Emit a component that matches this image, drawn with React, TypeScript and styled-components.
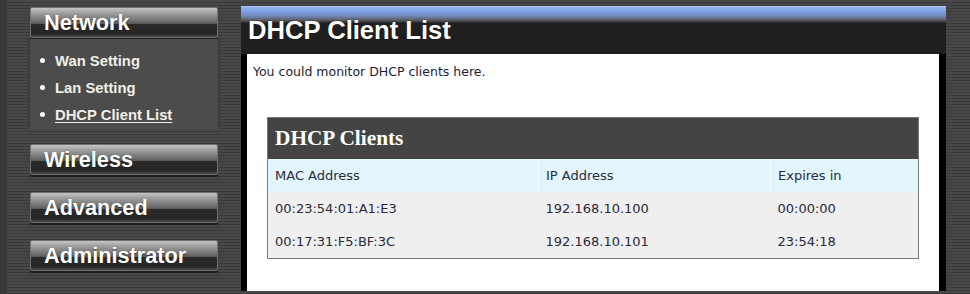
import React from "react";
import styled, { createGlobalStyle } from "styled-components";

const Global = createGlobalStyle`
  html, body { margin: 0; padding: 0; }
  body {
    background: repeating-linear-gradient(to bottom, #484848 0px, #484848 2px, #3a3a3a 2px, #3a3a3a 3px);
    font-family: "Liberation Sans", Arial, sans-serif;
    overflow: hidden;
  }
`;

const Page = styled.div`
  display: flex;
  align-items: flex-start;
  width: 970px;
  height: 294px;
  border-left: 7px solid #3a3a3a;
  box-sizing: border-box;
`;

const Sidebar = styled.nav`
  width: 188px;
  margin-left: 23px;
  padding-top: 7px;
  display: flex;
  flex-direction: column;
`;

const MenuButton = styled.div<{ $gap?: number }>`
  height: 29px;
  margin-top: ${(p) => p.$gap ?? 0}px;
  border: 1px solid #707070;
  border-radius: 2px;
  box-sizing: content-box;
  background: linear-gradient(
    to bottom,
    #c4c4c4 0%,
    #9a9a9a 20%,
    #707070 45%,
    #5a5a5a 54%,
    #2b2b2b 56%,
    #262626 88%,
    #4a4a4a 100%
  );
  box-shadow: 0 2px 0 #1f1f1f;
  color: #ffffff;
  font-weight: bold;
  font-size: 21.7px;
  line-height: 29px;
  padding-left: 13px;
  text-shadow: 0 1px 1px #222;
`;

const SubPanel = styled.ul`
  list-style: none;
  margin: 1px 0 0 0;
  padding: 8px 0 0 10px;
  height: 82px;
  background: #4c4c4c;
  border-left: 2px solid #3c3c3c;
  border-right: 2px solid #3c3c3c;
  margin-left: -2px;
  margin-right: -2px;
`;

const SubItem = styled.li<{ $active?: boolean }>`
  display: flex;
  align-items: center;
  height: 27px;
  gap: 10px;
  color: #f2efe6;
  font-weight: bold;
  font-size: 14.8px;
  text-decoration: ${(p) => (p.$active ? "underline" : "none")};
  text-underline-offset: 2px;
`;

const Bullet = styled.span`
  width: 5px;
  height: 5px;
  border-radius: 50%;
  background: #ffffff;
  flex: none;
`;

const Main = styled.main`
  margin-left: 23px;
  width: 705px;
  padding-top: 6px;
`;

const TitleBar = styled.h1`
  margin: 0;
  height: 48px;
  box-sizing: border-box;
  background: linear-gradient(
    to bottom,
    #cfe0ff 0px,
    #94b4f2 1px,
    #7b9de2 6px,
    #7088b8 10px,
    #5c5f68 14px,
    #3a3a3a 16px,
    #1f1f1f 17px,
    #1f1f1f 100%
  );
  color: #ffffff;
  font-size: 25.6px;
  font-weight: bold;
  line-height: 26px;
  padding: 11px 0 0 7px;
  text-shadow: 0 0 1px #000;
`;

const Content = styled.section`
  height: 237px;
  box-sizing: border-box;
  background: #ffffff;
  border-left: 6px solid #000;
  border-right: 7px solid #000;
  padding: 10px 20px 0 6px;
`;

const Intro = styled.p`
  margin: 0;
  font-family: "DejaVu Sans", Verdana, sans-serif;
  font-size: 12.5px;
  line-height: 16px;
  color: #1c1c30;
`;

const ClientTable = styled.table`
  margin: 37px 0 0 14px;
  width: 652px;
  border-collapse: collapse;
  border: 1px solid #7a7a7a;
  font-family: "DejaVu Sans", Verdana, sans-serif;
  font-size: 13px;
  color: #2a2a3a;
`;

const Caption = styled.th`
  background: #444444;
  height: 41px;
  padding: 0 0 0 7px;
  text-align: left;
  font-family: "Liberation Serif", "Times New Roman", serif;
  font-size: 21.3px;
  font-weight: bold;
  color: #ffffff;
`;

const HeadCell = styled.td<{ $w?: number }>`
  background: #e3f5fc;
  height: 33px;
  padding: 0 0 0 7px;
  width: ${(p) => (p.$w ? `${p.$w}px` : "auto")};
  border-left: 1px solid #f4fbff;
  &:first-child { border-left: none; }
`;

const Cell = styled.td`
  background: #efefef;
  height: 33px;
  padding: 0 0 0 7px;
`;

const clients = [
  { mac: "00:23:54:01:A1:E3", ip: "192.168.10.100", exp: "00:00:00" },
  { mac: "00:17:31:F5:BF:3C", ip: "192.168.10.101", exp: "23:54:18" },
];

export default function App() {
  return (
    <>
      <Global />
      <Page>
        <Sidebar>
          <MenuButton>Network</MenuButton>
          <SubPanel>
            <SubItem><Bullet />Wan Setting</SubItem>
            <SubItem><Bullet />Lan Setting</SubItem>
            <SubItem $active><Bullet />DHCP Client List</SubItem>
          </SubPanel>
          <MenuButton $gap={15}>Wireless</MenuButton>
          <MenuButton $gap={17}>Advanced</MenuButton>
          <MenuButton $gap={17}>Administrator</MenuButton>
        </Sidebar>
        <Main>
          <TitleBar>DHCP Client List</TitleBar>
          <Content>
            <Intro>You could monitor DHCP clients here.</Intro>
            <ClientTable>
              <thead>
                <tr>
                  <Caption colSpan={3}>DHCP Clients</Caption>
                </tr>
              </thead>
              <tbody>
                <tr>
                  <HeadCell $w={263}>MAC Address</HeadCell>
                  <HeadCell $w={224}>IP Address</HeadCell>
                  <HeadCell>Expires in</HeadCell>
                </tr>
                {clients.map((c) => (
                  <tr key={c.mac}>
                    <Cell>{c.mac}</Cell>
                    <Cell>{c.ip}</Cell>
                    <Cell>{c.exp}</Cell>
                  </tr>
                ))}
              </tbody>
            </ClientTable>
          </Content>
        </Main>
      </Page>
    </>
  );
}
